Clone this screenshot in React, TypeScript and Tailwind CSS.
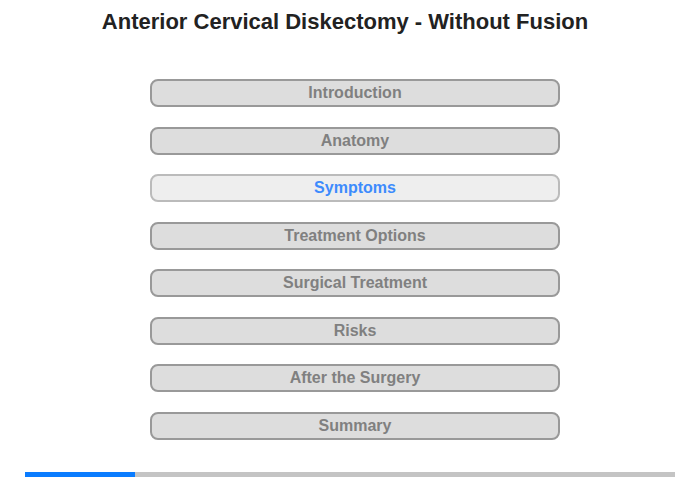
import React from 'react';

const sections = [
  'Introduction',
  'Anatomy',
  'Symptoms',
  'Treatment Options',
  'Surgical Treatment',
  'Risks',
  'After the Surgery',
  'Summary',
];

const App: React.FC = () => {
  const active = 'Symptoms';

  return (
    <div className="w-[700px] h-[480px] bg-white font-['Liberation_Sans',Arial,sans-serif] flex flex-col">
      {/* Title */}
      <h1 className="pt-[9px] pr-[10px] h-[79px] text-center text-[22px] leading-[26px] font-bold text-[#222222]">
        Anterior Cervical Diskectomy - Without Fusion
      </h1>

      {/* Menu */}
      <div className="pl-[10px] flex flex-col items-center gap-[19.5px]">
        {sections.map((s) => {
          const isActive = s === active;
          return (
            <button
              key={s}
              className={
                isActive
                  ? 'w-[410px] h-[28px] rounded-[8px] border-2 border-[#bbbbbb] bg-[#eeeeee] text-[#3d8bfd] text-[16px] font-bold leading-none'
                  : 'w-[410px] h-[28px] rounded-[8px] border-2 border-[#999999] bg-[#dddddd] text-[#808080] text-[16px] font-bold leading-none'
              }
            >
              {s}
            </button>
          );
        })}
      </div>

      {/* Progress */}
      <div className="mt-auto mb-[3px] mx-[25px] h-[5px] bg-[#c4c4c4] flex">
        <div className="w-[110px] h-full bg-[#0a7cff]" />
      </div>
    </div>
  );
};

export default App;
